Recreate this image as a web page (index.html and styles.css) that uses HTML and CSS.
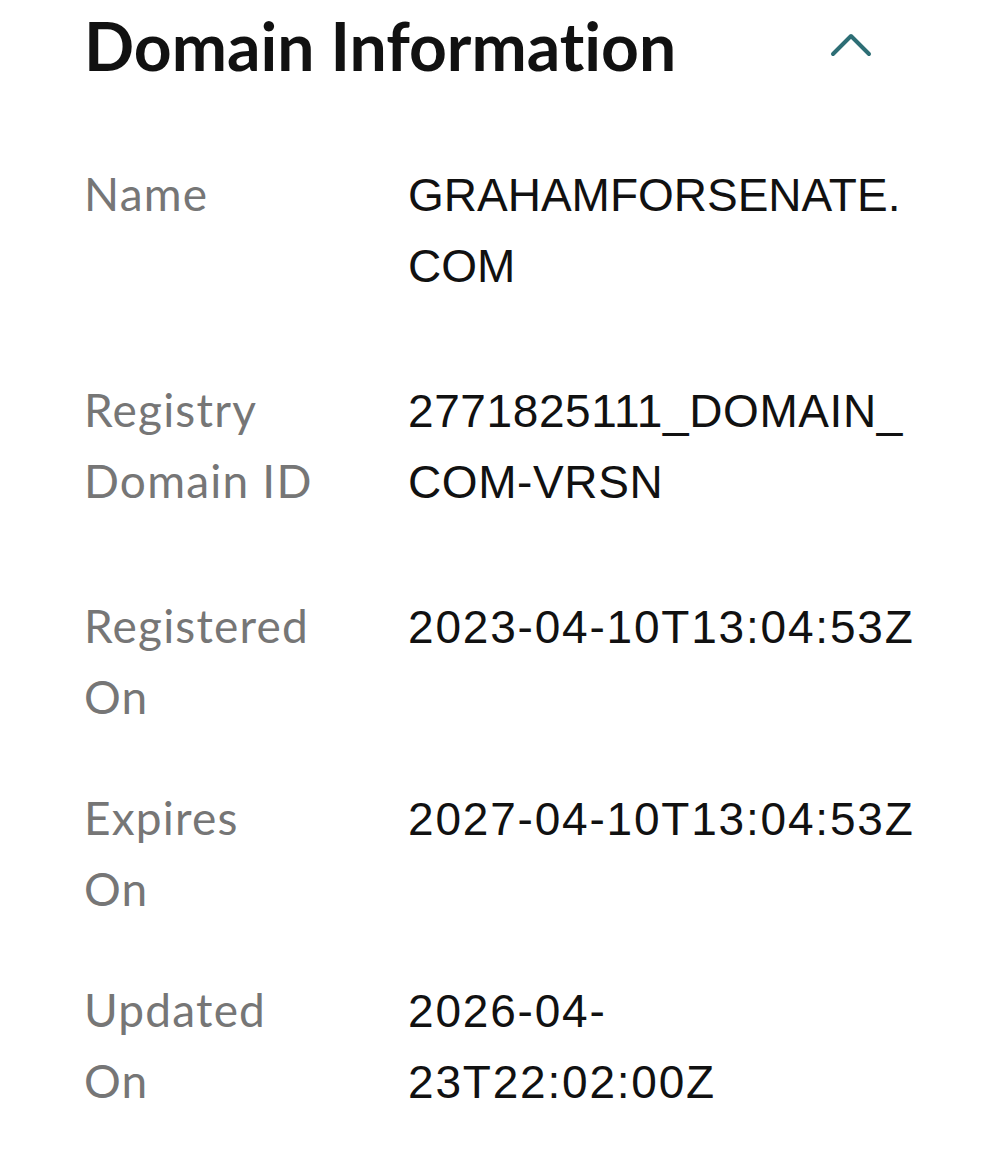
FILE: index.html
```html
<!DOCTYPE html>
<html lang="en">
<head>
<meta charset="utf-8">
<title>Domain Information</title>
<link rel="stylesheet" href="styles.css">
</head>
<body>
<section class="panel">
  <header class="panel-header">
    <h2 class="panel-title">Domain Information</h2>
    <button class="toggle" type="button" aria-label="Collapse">
      <svg width="44" height="28" viewBox="0 0 44 28" aria-hidden="true">
        <path d="M4 22 L22 4 L40 22" fill="none" stroke="#2d6e75" stroke-width="4" stroke-linecap="round" stroke-linejoin="round"/>
      </svg>
    </button>
  </header>
  <dl class="info-list">
    <div class="info-row info-row--wide">
      <dt class="info-label">Name</dt>
      <dd class="info-value">GRAHAMFORSENATE.<br>COM</dd>
    </div>
    <div class="info-row info-row--wide">
      <dt class="info-label">Registry<br>Domain ID</dt>
      <dd class="info-value info-value--id">2771825111_DOMAIN_<br>COM-VRSN</dd>
    </div>
    <div class="info-row">
      <dt class="info-label">Registered<br>On</dt>
      <dd class="info-value info-value--date">2023-04-10T13:04:53Z</dd>
    </div>
    <div class="info-row">
      <dt class="info-label">Expires<br>On</dt>
      <dd class="info-value info-value--date">2027-04-10T13:04:53Z</dd>
    </div>
    <div class="info-row">
      <dt class="info-label">Updated<br>On</dt>
      <dd class="info-value info-value--date">2026-04-<br>23T22:02:00Z</dd>
    </div>
  </dl>
</section>
</body>
</html>
```

FILE: styles.css
```css
html, body {
  margin: 0;
  padding: 0;
  background: #ffffff;
}

.panel {
  padding: 6px 128px 0 84px;
}

.panel-header {
  display: flex;
  align-items: center;
  justify-content: space-between;
}

.panel-title {
  margin: 0;
  font-family: Lato, "Noto Sans", sans-serif;
  font-weight: 700;
  font-size: 66px;
  line-height: 80px;
  color: #111111;
  font-variant-ligatures: none;
  font-feature-settings: "liga" 0;
}

.toggle {
  display: flex;
  padding: 0;
  margin: -1px 0 0 0;
  border: 0;
  background: none;
}

.toggle svg {
  display: block;
}

.info-list {
  margin: 72px 0 0 0;
  display: flex;
  flex-direction: column;
  gap: 50px;
}

.info-row {
  display: grid;
  grid-template-columns: 324px 1fr;
  align-items: baseline;
}

.info-row--wide {
  margin-bottom: 22px;
}

.info-label {
  margin: 0;
  font-family: Lato, "Noto Sans", sans-serif;
  font-weight: 400;
  font-size: 46px;
  line-height: 71px;
  letter-spacing: 1.2px;
  color: #767676;
  font-variant-ligatures: none;
}

.info-value {
  margin: 0;
  font-family: "Liberation Sans", Arial, sans-serif;
  font-size: 46px;
  line-height: 71px;
  color: #111111;
  white-space: nowrap;
}

.info-value--id {
  letter-spacing: 0.6px;
}

.info-value--date {
  letter-spacing: 1.8px;
}
```
